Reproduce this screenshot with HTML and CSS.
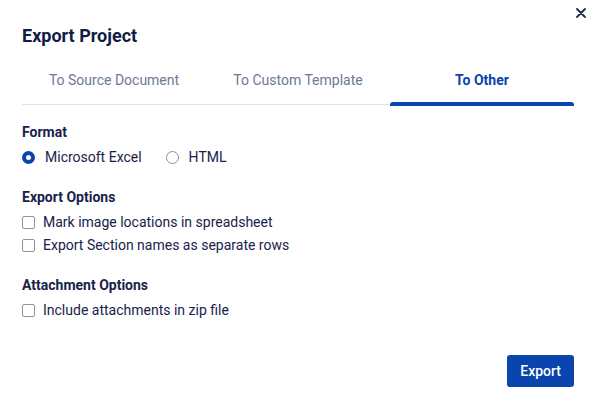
FILE: index.html
```html
<!DOCTYPE html>
<html lang="en">
<head>
<meta charset="utf-8">
<title>Export Project</title>
<link rel="stylesheet" href="styles.css">
</head>
<body>
<div class="dialog">
  <button class="close" aria-label="Close">
    <svg width="10" height="10" viewBox="0 0 10 10"><path d="M1 1L9 9M9 1L1 9" stroke="#1b2a4e" stroke-width="1.8" stroke-linecap="round"/></svg>
  </button>
  <h1 class="title">Export Project</h1>
  <div class="tabs">
    <div class="tab">To Source Document</div>
    <div class="tab">To Custom Template</div>
    <div class="tab active">To Other</div>
  </div>
  <div class="section first">
    <div class="label">Format</div>
    <div class="radios">
      <label class="opt"><span class="radio checked"></span>Microsoft Excel</label>
      <label class="opt"><span class="radio"></span>HTML</label>
    </div>
  </div>
  <div class="section checks">
    <div class="label">Export Options</div>
    <label class="opt row"><span class="check"></span>Mark image locations in spreadsheet</label>
    <label class="opt row"><span class="check"></span>Export Section names as separate rows</label>
  </div>
  <div class="section checks att">
    <div class="label">Attachment Options</div>
    <label class="opt row"><span class="check"></span>Include attachments in zip file</label>
  </div>
  <div class="footer">
    <button class="btn">Export</button>
  </div>
</div>
</body>
</html>
```

FILE: styles.css
```css
* { box-sizing: border-box; }
html, body { margin: 0; padding: 0; background: #fff; }
body { font-family: Roboto, "Noto Sans", Arial, sans-serif; color: #17224a; }

.dialog {
  position: relative;
  width: 594px;
  height: 399px;
  padding: 24px 20px 12px 22px;
  display: flex;
  flex-direction: column;
}

.close {
  position: absolute;
  top: 8px;
  right: 8px;
  width: 10px;
  height: 10px;
  padding: 0;
  border: 0;
  background: none;
  display: flex;
}

.title {
  margin: 0;
  font-size: 18px;
  line-height: 24px;
  font-weight: 700;
  color: #0f1c48;
}

.tabs {
  margin-top: 12px;
  display: grid;
  grid-template-columns: repeat(3, 1fr);
  border-bottom: 1px solid #dfe2e7;
}

.tab {
  position: relative;
  height: 44px;
  padding-top: 10px;
  text-align: center;
  font-size: 14px;
  line-height: 20px;
  color: #6c7a91;
}

.tab.active {
  color: #0a45ad;
  font-weight: 700;
}

.tab.active::after {
  content: "";
  position: absolute;
  left: 0;
  right: 0;
  bottom: -2px;
  height: 4px;
  background: #0a45ad;
  border-radius: 3px 3px 0 0;
}

.section { margin-top: 18px; }
.section.first { margin-top: 17px; }
.section.att { margin-top: 18px; }

.label {
  font-size: 14px;
  line-height: 20px;
  font-weight: 700;
  color: #17224a;
  margin-bottom: 2px;
}

.checks .label { margin-bottom: 4px; }

.radios {
  display: flex;
  padding-top: 2px;
  gap: 24px;
}

.opt {
  display: flex;
  align-items: center;
  height: 23px;
  font-size: 14px;
  line-height: 23px;
  color: #17224a;
}

.radio {
  width: 13px;
  height: 13px;
  border-radius: 50%;
  border: 1px solid #8a909c;
  margin-right: 10px;
  flex: none;
}

.radio.checked {
  border: 4px solid #0a45ad;
  background: #fff;
}

.check {
  width: 13px;
  height: 13px;
  border: 1px solid #8e939e;
  border-radius: 2px;
  margin-right: 8px;
  flex: none;
}

.footer {
  margin-top: auto;
  display: flex;
  justify-content: flex-end;
}

.btn {
  height: 32px;
  padding: 0 13px;
  border: 0;
  border-radius: 3px;
  background: #0a45ad;
  color: #fff;
  font-family: Roboto, "Noto Sans", Arial, sans-serif;
  font-size: 14px;
  font-weight: 500;
}
```
